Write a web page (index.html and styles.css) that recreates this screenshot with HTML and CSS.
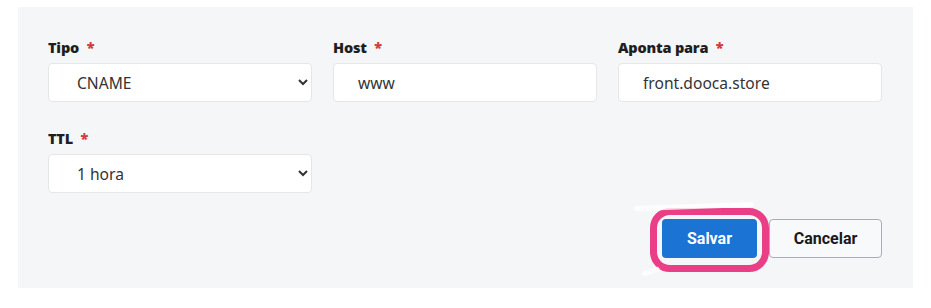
FILE: index.html
```html
<!DOCTYPE html>
<html lang="pt">
<head>
<meta charset="utf-8">
<link rel="stylesheet" href="styles.css">
</head>
<body>
<div class="panel">
  <div class="grid">
    <div class="field">
      <label class="label">Tipo <span class="req">*</span></label>
      <select class="control select"><option>CNAME</option></select>
    </div>
    <div class="field">
      <label class="label">Host <span class="req">*</span></label>
      <input class="control input" value="www">
    </div>
    <div class="field">
      <label class="label">Aponta para <span class="req">*</span></label>
      <input class="control input" value="front.dooca.store">
    </div>
    <div class="field">
      <label class="label">TTL <span class="req">*</span></label>
      <select class="control select"><option>1 hora</option></select>
    </div>
  </div>
  <div class="actions">
    <div class="save-wrap">
      <button class="btn btn-primary">Salvar</button>
      <span class="highlight"></span>
      <span class="scribble scribble-top"></span>
      <span class="scribble scribble-bottom"></span>
    </div>
    <button class="btn btn-secondary">Cancelar</button>
  </div>
</div>
</body>
</html>
```

FILE: styles.css
```css
html, body {
  margin: 0;
  padding: 0;
  background: #ffffff;
}

body {
  padding: 7px 0 0 18px;
  font-family: "Noto Sans", sans-serif;
}

.panel {
  width: 895px;
  height: 281px;
  box-sizing: border-box;
  background: #f5f6f8;
  padding: 33px 31px 0 30px;
}

.grid {
  display: grid;
  grid-template-columns: repeat(3, 264px);
  column-gap: 21px;
  row-gap: 29px;
}

.field {
  display: flex;
  flex-direction: column;
}

.label {
  font-family: "Open Sans", "Noto Sans", sans-serif;
  font-weight: 800;
  font-size: 14.5px;
  line-height: 16px;
  color: #1f1f1f;
  margin-bottom: 7px;
  letter-spacing: -0.2px;
}

.req {
  color: #d43b3b;
  margin-left: 4px;
}

.control {
  box-sizing: border-box;
  height: 39px;
  width: 100%;
  background: #ffffff;
  border: 1px solid #e4e6ea;
  border-radius: 4px;
  font-family: "Noto Sans", sans-serif;
  font-size: 15.6px;
  color: #333333;
  margin: 0;
  outline: none;
}

.input {
  padding: 0 24px;
}

.select {
  padding: 0 6px 0 24px;
}

.actions {
  display: flex;
  justify-content: flex-end;
  align-items: center;
  gap: 12px;
  margin-top: 26px;
}

.save-wrap {
  position: relative;
  display: flex;
}

.btn {
  box-sizing: border-box;
  height: 39px;
  border-radius: 4px;
  font-family: Roboto, "Liberation Sans", sans-serif;
  font-weight: 700;
  font-size: 16px;
  cursor: pointer;
}

.btn-primary {
  width: 95px;
  background: #1b74d3;
  color: #ffffff;
  border: none;
}

.btn-secondary {
  width: 113px;
  background: #f8f9fa;
  color: #1a1a1a;
  border: 1px solid #a9acb0;
}

.highlight {
  position: absolute;
  left: -12px;
  right: -12px;
  top: -11px;
  bottom: -14px;
  border: 7px solid #ea3f86;
  border-radius: 20px;
  pointer-events: none;
}

.scribble {
  position: absolute;
  background: rgba(255, 255, 255, 0.8);
  border-radius: 6px;
  pointer-events: none;
}

.scribble-top {
  left: -28px;
  top: -15px;
  width: 120px;
  height: 5px;
  transform: rotate(-2deg);
}

.scribble-bottom {
  left: -20px;
  bottom: -16px;
  width: 18px;
  height: 5px;
  transform: rotate(-20deg);
}
```
